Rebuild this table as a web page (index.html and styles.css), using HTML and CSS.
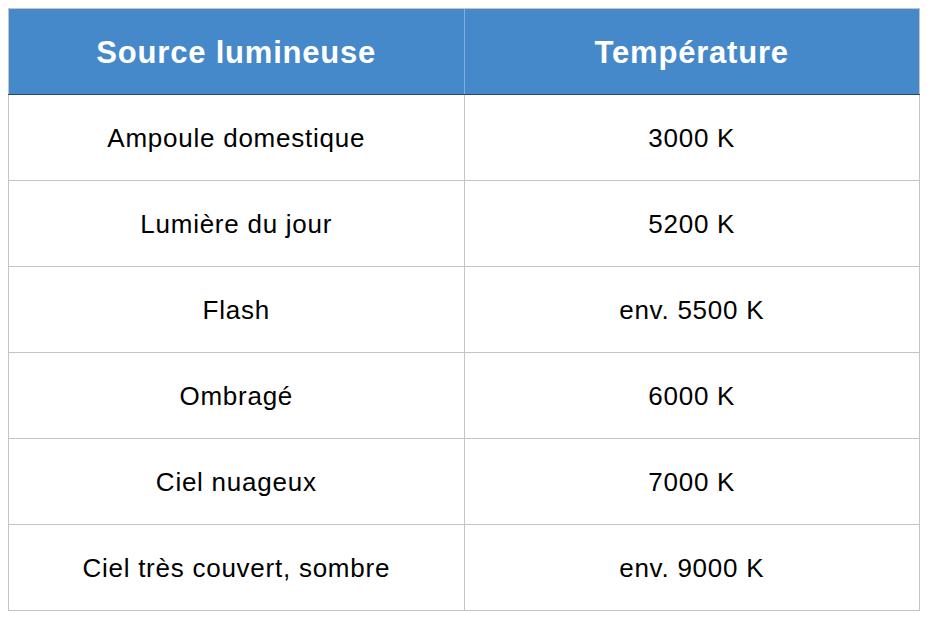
FILE: index.html
```html
<!DOCTYPE html>
<html lang="fr">
<head>
<meta charset="utf-8">
<link rel="stylesheet" href="styles.css">
</head>
<body>
<table class="temps">
  <thead>
    <tr><th>Source lumineuse</th><th>Température</th></tr>
  </thead>
  <tbody>
    <tr><td>Ampoule domestique</td><td>3000 K</td></tr>
    <tr><td>Lumière du jour</td><td>5200 K</td></tr>
    <tr><td>Flash</td><td>env. 5500 K</td></tr>
    <tr><td>Ombragé</td><td>6000 K</td></tr>
    <tr><td>Ciel nuageux</td><td>7000 K</td></tr>
    <tr><td>Ciel très couvert, sombre</td><td>env. 9000 K</td></tr>
  </tbody>
</table>
</body>
</html>
```
FILE: styles.css
```css
html, body {
  margin: 0;
  padding: 0;
  background: #ffffff;
}
body {
  padding: 8px;
  font-family: "Liberation Sans", Arial, sans-serif;
}
.temps {
  width: 912px;
  border-collapse: collapse;
  table-layout: fixed;
  border: 1px solid #c4c4c4;
}
.temps th {
  background: #4589ca;
  color: #ffffff;
  font-weight: bold;
  font-size: 31px;
  letter-spacing: 0.8px;
  height: 83px;
  padding: 2px 0 0;
  text-align: center;
  vertical-align: middle;
  border-left: 1px solid #7eb0de;
  border-bottom: 1px solid #2b4862;
  border-top: 1px solid #c4c4c4;
}
.temps th:first-child {
  border-left: 1px solid #c4c4c4;
}
.temps td {
  color: #000000;
  font-size: 26px;
  letter-spacing: 0.75px;
  height: 83px;
  padding: 2px 0 0;
  text-align: center;
  vertical-align: middle;
  border: 1px solid #c4c4c4;
}
```
